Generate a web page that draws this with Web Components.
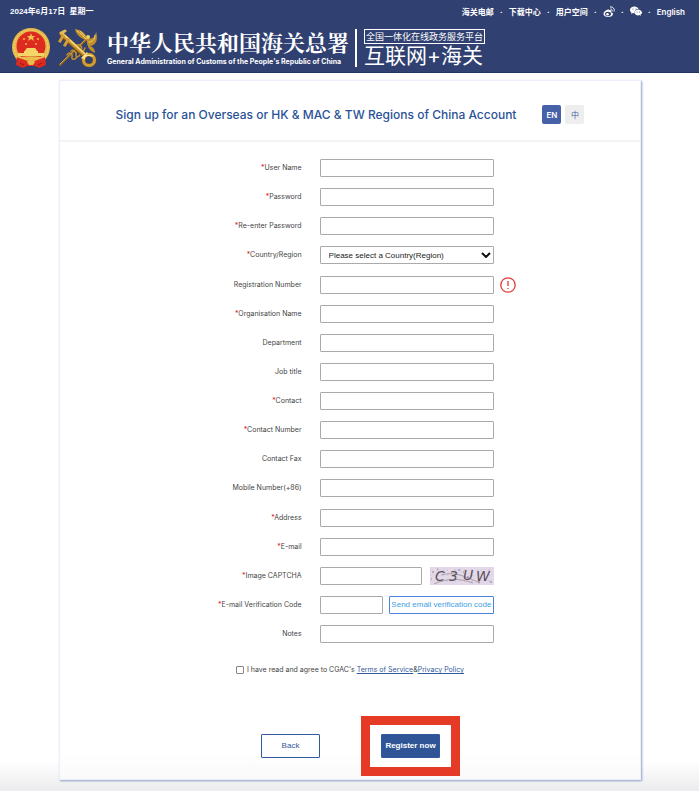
<!DOCTYPE html>
<html lang="en">
<head>
<meta charset="utf-8">
<meta name="viewport" content="width=device-width, initial-scale=1">
<title>Sign up - General Administration of Customs</title>
<style>
    body {
        margin: 0;
        min-height: 100vh;
        background: linear-gradient(to top, #ececee 0, #fff 30px);
        font-family: Inter, "Noto Sans CJK SC", sans-serif;
        color: #444;
    }
</style>
</head>
<body>
<customs-app></customs-app>

<script>
class TopNav extends HTMLElement {
    constructor() {
        super();
        this.attachShadow({ mode: 'open' });
    }

    connectedCallback() {
        this.shadowRoot.innerHTML = `
            <style>
                :host { display: flex; justify-content: space-between; align-items: center; height: 23px; font-size: 8px; line-height: 12px; font-weight: 600; }
                .date { font-family: "Liberation Sans", "Noto Sans CJK SC", sans-serif; }
                nav { display: flex; align-items: center; gap: 6px; }
                a { color: inherit; text-decoration: none; display: flex; }
                i { width: 3px; text-align: center; font-style: normal; }
                svg { display: block; }
            </style>
            <span class="date">2024年6月17日&nbsp; 星期一</span>
            <nav>
                <a href="#">海关电邮</a><i>·</i>
                <a href="#">下载中心</a><i>·</i>
                <a href="#">用户空间</a><i>·</i>
                <a href="#" aria-label="Weibo">
                    <svg width="12" height="12" viewBox="0 0 24 24" fill="none" stroke="#fff">
                        <path d="M10 7C5 8 1 12 1 16c0 8 19 8 19 0 0-2-2-3-4-3 2-5-1-6-5-4 1-2 0-3-1-2z" fill="#fff" stroke="none"/>
                        <ellipse cx="10" cy="16" rx="6" ry="4.300" fill="#304071" stroke="none"/>
                        <circle cx="9" cy="16.500" r="2.600" fill="#fff" stroke="none"/>
                        <path d="M14 2c6-1 10 4 8 9M15 6c3 0 4 2 3 5" stroke-width="2"/>
                    </svg>
                </a><i>·</i>
                <a href="#" aria-label="WeChat">
                    <svg width="12" height="11" viewBox="0 0 24 22">
                        <path d="M9 1C4 1 0 4 0 8c0 2 1 4 3 5l-1 3 4-2 3 1c-1-5 3-9 8-9C16 3 13 1 9 1z" fill="#fff"/>
                        <path d="M16 7c-4 0-7 3-7 6s3 6 7 6l3-1 3 2-1-3c2-1 3-2 3-4 0-3-4-6-8-6z" fill="#fff"/>
                        <g fill="#304071"><circle cx="6" cy="6" r="1"/><circle cx="12" cy="6" r="1"/><circle cx="14" cy="12" r="1"/><circle cx="19" cy="12" r="1"/></g>
                    </svg>
                </a><i>·</i>
                <a href="#">English</a>
            </nav>
        `;
    }
}

class NationalEmblem extends HTMLElement {
    constructor() {
        super();
        this.attachShadow({ mode: 'open' });
    }

    connectedCallback() {
        this.shadowRoot.innerHTML = `
            <style>
                :host { display: block; }
                svg { display: block; }
            </style>
            <svg width="38" height="40" viewBox="0 0 38 40" aria-hidden="true">
                <circle cx="19" cy="19" r="19" fill="#e6b84a"/>
                <circle cx="19" cy="19" r="17" fill="none" stroke="#f3d478" stroke-dasharray="2 1"/>
                <path d="M5 29 4 37l7 3 4-2h8l4 2 7-3-1-8-8 5H13z" fill="#d92b20"/>
                <circle cx="19" cy="18" r="14.500" fill="#dd2b20"/>
                <path d="m19 5 1 3h3l-2 2 1 3-3-2-3 2 1-3-2-2h3z" fill="#f0c350"/>
                <g fill="#f0b850"><circle cx="12" cy="11" r="1"/><circle cx="26" cy="11" r="1"/><circle cx="14" cy="16" r="1"/><circle cx="24" cy="16" r="1"/></g>
                <path d="m14 21 1-1h8l1 1 1 2H13zM12 23h14v2h6v3H6v-3h6z" fill="#f5d468"/>
                <path d="M8 29c7-1 15-1 22 0l-4 3H12z" fill="#e9bd4c"/>
                <path d="M6 30c5 1 8 2 11 4h4c3-2 6-3 11-4l-1 6-6 1-4-2h-4l-4 2-6-1z" fill="#dd2b20"/>
                <path d="M15 34c2-3 6-3 8 0l-2 3h-4z" fill="#e9bd4c"/>
                <path d="m8 35 4 2M30 35l-4 2" stroke="#a8150f"/>
            </svg>
        `;
    }
}

class CustomsKey extends HTMLElement {
    constructor() {
        super();
        this.attachShadow({ mode: 'open' });
    }

    connectedCallback() {
        this.shadowRoot.innerHTML = `
            <style>
                :host { display: block; }
                svg { display: block; }
            </style>
            <svg width="40" height="38" viewBox="0 0 40 38" fill="none" stroke-linecap="round" aria-hidden="true">
                <path d="M2 36 31 8" stroke="#8c6220" stroke-width="2"/>
                <path d="M2 35 30 8" stroke="#d9ab49"/>
                <path d="M9 26c2-4 6-1 5 2s3 3 5 0M13 22c3-2 6 1 5 4s4 2 5-2M19 16c3-1 6 2 4 5s3 2 4-2" stroke="#c08f32" stroke-width="1.500"/>
                <path d="M29 9C27 4 24 1 17 0c1 6 6 9 12 12zM29 9c5 2 9-1 9-7 2 8 1 14-6 15 3 1 5 3 5 7-6-2-9-8-8-15z" fill="#c28d2b"/>
                <path d="M19 2c4 2 6 5 9 8M37 6c0 5-3 7-6 7M22 2l5 5" stroke="#efd070"/>
                <circle cx="30" cy="8" r="2" fill="#f4cf62"/>
                <path d="m4 6 23 21" stroke="#6e4b16" stroke-width="5"/>
                <path d="m4 5 23 21" stroke="#c8902b" stroke-width="4"/>
                <path d="m4 4 23 21" stroke="#f8de84" stroke-width="1.500"/>
                <path d="m5 7-3 5M10 11l-3 5" stroke="#d29c37" stroke-width="3" stroke-linecap="square"/>
                <path d="M3 4 7 2" stroke="#e6bd55" stroke-width="3"/>
                <circle cx="31" cy="31" r="5.500" stroke="#76511a" stroke-width="4"/>
                <circle cx="31" cy="31" r="5.500" stroke="#d19d37" stroke-width="3"/>
                <path d="M26 30c0-3 4-5 8-3M24 29l5-5" stroke="#fbe590" stroke-width="1.500"/>
            </svg>
        `;
    }
}

class SiteHeader extends HTMLElement {
    constructor() {
        super();
        this.attachShadow({ mode: 'open' });
    }

    connectedCallback() {
        this.shadowRoot.innerHTML = `
            <style>
                :host { display: block; background: #304071; border-bottom: 1px solid #213264; color: #fff; padding: 0 14px 0 10px; }
                .brand { display: flex; align-items: center; height: 49px; padding-left: 2px; }
                customs-key { margin: 0 9px 0 8px; }
                .name { display: grid; gap: 1px; }
                h1 { margin: 0; font: 700 22px/28px "Noto Serif CJK SC", "Noto Sans CJK SC", serif; white-space: nowrap; }
                .name span { font: 700 7px/10px Inter, sans-serif; white-space: nowrap; }
                .service { display: grid; justify-items: start; gap: 1px; margin-left: 6px; padding-left: 7px; border-left: 2px solid #fff; }
                .tag { border: 1px solid #fff; padding: 0 1px; font-size: 9px; line-height: 13px; white-space: nowrap; }
                .plus { font-size: 21px; line-height: 22px; white-space: nowrap; }
            </style>
            <top-nav></top-nav>
            <div class="brand">
                <national-emblem></national-emblem>
                <customs-key></customs-key>
                <div class="name">
                    <h1>中华人民共和国海关总署</h1>
                    <span>General Administration of Customs of the People's Republic of China</span>
                </div>
                <div class="service">
                    <div class="tag">全国一体化在线政务服务平台</div>
                    <div class="plus">互联网+海关</div>
                </div>
            </div>
        `;
    }
}

class FormField extends HTMLElement {
    constructor() {
        super();
        this.attachShadow({ mode: 'open' });
    }

    connectedCallback() {
        const type = this.getAttribute('type') || 'text';
        const required = this.hasAttribute('required');
        const control = type === 'select'
            ? `<select id="control"><option>${this.getAttribute('placeholder')}</option></select>
               <svg class="arrow" width="10" height="6" viewBox="0 0 10 6"><path d="m1 1 4 4 4-4" fill="none" stroke="#111" stroke-width="2"/></svg>`
            : `<input id="control" type="${type}">`;

        this.shadowRoot.innerHTML = `
            <style>
                :host { display: grid; grid-template-columns: 42% 30% auto; justify-content: start; column-gap: 16px; align-items: center; }
                label { text-align: right; font-size: 7px; line-height: 10px; padding-right: 2px; }
                b { color: #e02020; font-weight: 400; }
                .control { display: flex; gap: 6px; position: relative; }
                input, select { flex: 1; min-width: 0; box-sizing: border-box; height: 18px; margin: 0; border: 1px solid #aaa; border-radius: 1px; background: #fff; font: 8px "Liberation Sans", sans-serif; color: #222; padding: 0 8px; }
                select { appearance: none; }
                .arrow { position: absolute; right: 3px; top: 6px; pointer-events: none; }
            </style>
            <label for="control">${required ? '<b>*</b>' : ''}${this.getAttribute('label')}</label>
            <div class="control">${control}<slot></slot></div>
            <slot name="hint"></slot>
        `;
    }
}

class WarningIcon extends HTMLElement {
    constructor() {
        super();
        this.attachShadow({ mode: 'open' });
    }

    connectedCallback() {
        this.shadowRoot.innerHTML = `
            <style>
                :host { display: block; margin-left: -10px; }
                svg { display: block; }
            </style>
            <svg width="16" height="16" viewBox="0 0 16 16" fill="none" stroke="#e23b36" role="img" aria-label="Note">
                <circle cx="8" cy="8" r="7.200" stroke-width="1.300"/>
                <path d="M8 4v5M8 11v1" stroke-width="1.300"/>
            </svg>
        `;
    }
}

class CaptchaImage extends HTMLElement {
    constructor() {
        super();
        this.attachShadow({ mode: 'open' });
    }

    connectedCallback() {
        this.shadowRoot.innerHTML = `
            <style>
                :host { display: block; margin-left: 2px; }
                svg { display: block; background: #e3d8e8; }
                text { font: italic 14px "DejaVu Sans", sans-serif; fill: #5b5059; }
            </style>
            <svg width="64" height="18" viewBox="0 0 64 18">
                <path d="M0 3h64M0 8h64M0 14h64" stroke="#cbbccf" stroke-dasharray="1 6 2 4 1 3"/>
                <path d="M4 17c13-6 25-6 39-1M11 8c14-4 25 2 39 8" fill="none" stroke="#aaa0ac"/>
                <path d="M2 5h2M7 2h1M28 3h2M37 10h2M33 5h1M60 15h2M48 15h2M1 12h1" stroke="#8b7f90"/>
                <text x="5" y="14">C</text>
                <text x="19" y="14">3</text>
                <text x="33" y="13">U</text>
                <text x="46" y="14">W</text>
            </svg>
        `;
    }
}

class ActionButton extends HTMLElement {
    constructor() {
        super();
        this.attachShadow({ mode: 'open' });
    }

    connectedCallback() {
        this.shadowRoot.innerHTML = `
            <style>
                :host { display: block; }
                button { display: block; box-sizing: border-box; width: 100%; height: 24px; margin: 0; padding: 0; border: 1px solid #31599d; border-radius: 1px; background: #fff; color: #31599d; font: 8px/12px "Liberation Sans", sans-serif; white-space: nowrap; cursor: pointer; }
                :host([variant="primary"]) button { background: #2f5597; color: #fff; font-weight: 700; }
                :host([variant="send"]) button { height: 18px; border-color: #4b83dc; color: #43a0df; }
                :host([variant="lang"]) button, :host([variant="current"]) button { height: 19px; border: 0; border-radius: 2px; background: #eee; color: #4661a8; font: 8px/12px Inter, "Noto Sans CJK SC", sans-serif; }
                :host([variant="current"]) button { background: #4661a8; color: #fff; font-weight: 600; }
            </style>
            <button type="button"><slot></slot></button>
        `;
    }
}

class TermsCheck extends HTMLElement {
    constructor() {
        super();
        this.attachShadow({ mode: 'open' });
    }

    connectedCallback() {
        this.shadowRoot.innerHTML = `
            <style>
                :host { display: flex; align-items: center; justify-content: center; gap: 3px; font-size: 7px; line-height: 10px; }
                input { appearance: none; box-sizing: border-box; width: 8px; height: 8px; margin: 0; border: 1px solid #888; border-radius: 1px; background: #fff; }
                input:checked { background: #31599d; }
                a { color: #31599d; }
            </style>
            <input id="agree" type="checkbox">
            <span><label for="agree">I have read and agree to CGAC's</label> <a href="#">Terms of Service</a>&amp;<a href="#">Privacy Policy</a></span>
        `;
    }
}

class SignupCard extends HTMLElement {
    constructor() {
        super();
        this.attachShadow({ mode: 'open' });
    }

    connectedCallback() {
        this.shadowRoot.innerHTML = `
            <style>
                :host { display: block; margin: 7px 58px 11px 59px; background: linear-gradient(to top, #fafafb 0, #fff 30px); border: 1px solid #edf0f8; box-sizing: border-box; box-shadow: 1px 1px 2px #8e9fc9; }
                header { display: flex; align-items: center; justify-content: center; gap: 26px; height: 61px; padding: 8px 0 0; box-sizing: border-box; border-bottom: 2px solid #f3f3f4; }
                h2 { margin: 0; color: #2a5298; font-size: 12px; line-height: 16px; font-weight: 500; }
                .langs { display: flex; gap: 4px; }
                .langs action-button { width: 19px; }
                form { display: grid; align-content: space-between; min-height: 484px; padding-top: 17px; }
                .send { width: 60%; }
                terms-check { margin-top: 22px; }
                footer { display: flex; align-items: center; justify-content: center; gap: 41px; padding: 41px 0 3px 21px; }
                footer action-button { width: 59px; }
                .highlight { border: 9px solid #e43a26; padding: 9px 11px; background: #fff; }
            </style>
            <header>
                <h2>Sign up for an Overseas or HK &amp; MAC &amp; TW Regions of China Account</h2>
                <div class="langs">
                    <action-button variant="current">EN</action-button>
                    <action-button variant="lang">中</action-button>
                </div>
            </header>
            <form>
                <form-field label="User Name" required></form-field>
                <form-field label="Password" type="password" required></form-field>
                <form-field label="Re-enter Password" type="password" required></form-field>
                <form-field label="Country/Region" type="select" placeholder="Please select a Country(Region)" required></form-field>
                <form-field label="Registration Number"><warning-icon slot="hint"></warning-icon></form-field>
                <form-field label="Organisation Name" required></form-field>
                <form-field label="Department"></form-field>
                <form-field label="Job title"></form-field>
                <form-field label="Contact" required></form-field>
                <form-field label="Contact Number" type="tel" required></form-field>
                <form-field label="Contact Fax"></form-field>
                <form-field label="Mobile Number(+86)" type="tel"></form-field>
                <form-field label="Address" required></form-field>
                <form-field label="E-mail" type="email" required></form-field>
                <form-field label="Image CAPTCHA" required><captcha-image></captcha-image></form-field>
                <form-field label="E-mail Verification Code" required><action-button class="send" variant="send">Send email verification code</action-button></form-field>
                <form-field label="Notes"></form-field>
            </form>
            <terms-check></terms-check>
            <footer>
                <action-button>Back</action-button>
                <div class="highlight"><action-button variant="primary">Register now</action-button></div>
            </footer>
        `;
    }
}

class CustomsApp extends HTMLElement {
    constructor() {
        super();
        this.attachShadow({ mode: 'open' });
    }

    connectedCallback() {
        this.shadowRoot.innerHTML = `
            <style>
                :host { display: flow-root; }
            </style>
            <site-header></site-header>
            <signup-card></signup-card>
        `;
    }
}

customElements.define('top-nav', TopNav);
customElements.define('national-emblem', NationalEmblem);
customElements.define('customs-key', CustomsKey);
customElements.define('site-header', SiteHeader);
customElements.define('form-field', FormField);
customElements.define('warning-icon', WarningIcon);
customElements.define('captcha-image', CaptchaImage);
customElements.define('action-button', ActionButton);
customElements.define('terms-check', TermsCheck);
customElements.define('signup-card', SignupCard);
customElements.define('customs-app', CustomsApp);
</script>
</body>
</html>
